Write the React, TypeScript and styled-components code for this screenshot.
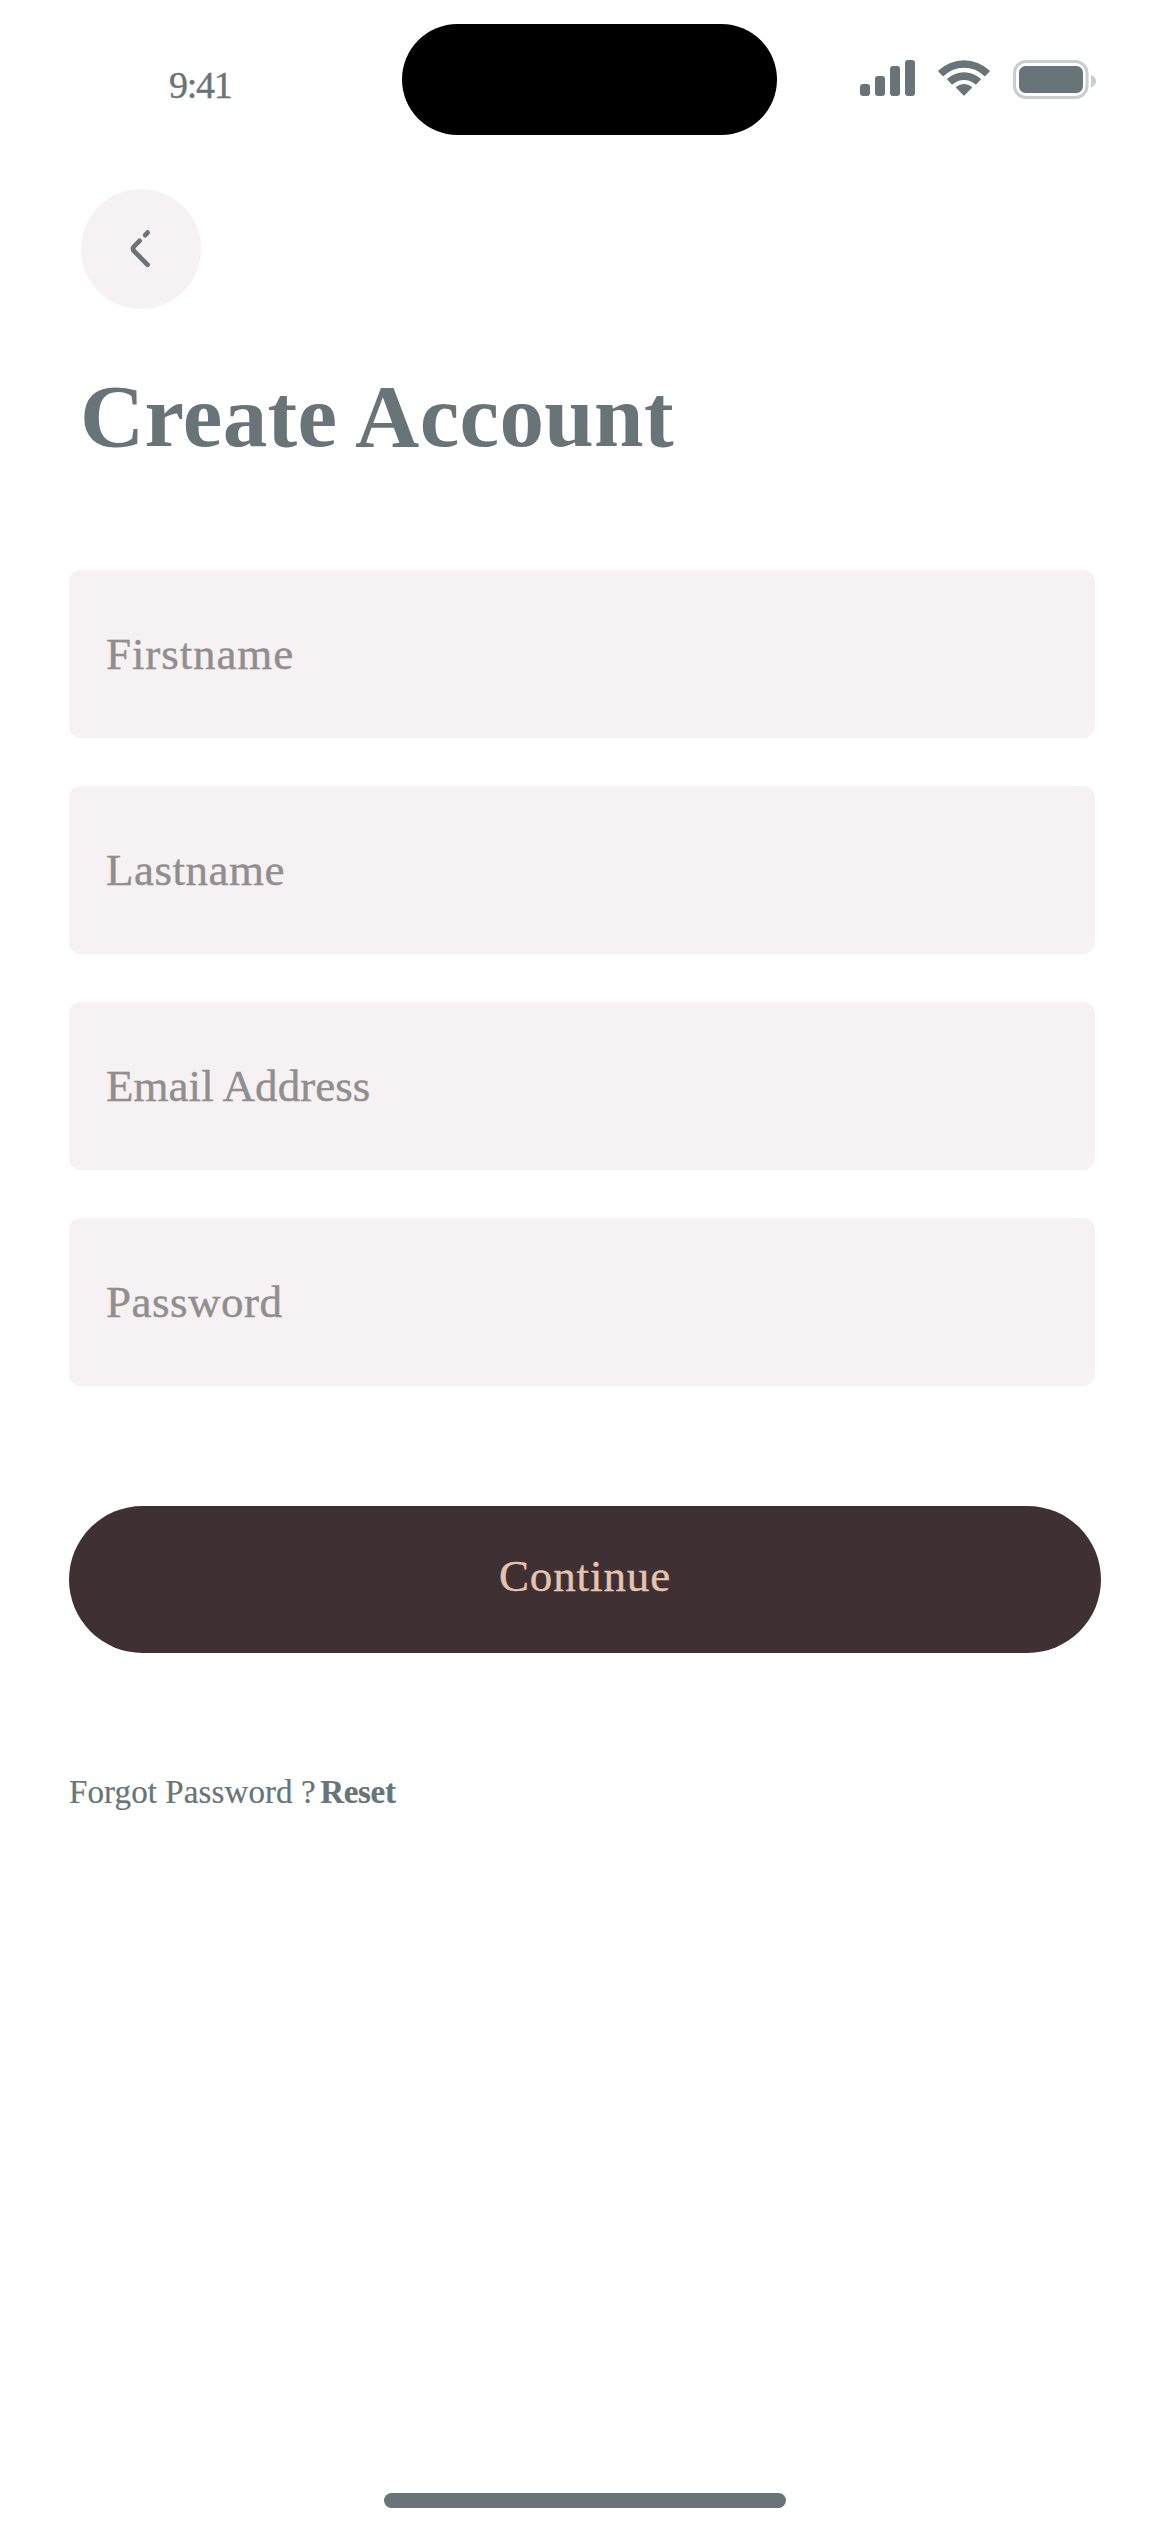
import React from "react";
import styled, { createGlobalStyle } from "styled-components";

const slate = "#687477";
const blush = "#f6f2f4";

const GlobalStyle = createGlobalStyle`
  * { box-sizing: border-box; }
  body { margin: 0; background: #fff; }
`;

const Screen = styled.div`
  width: 1170px;
  height: 2532px;
  display: flex;
  flex-direction: column;
  background: #fff;
  color: ${slate};
  font-family: "Liberation Serif", "Times New Roman", serif;
`;

const StatusBar = styled.header`
  height: 189px;
  padding: 24px 73px 0 169px;
  display: grid;
  grid-template-columns: 233px 375px 1fr;
  align-items: start;
`;

const Clock = styled.time`
  margin-top: 39px;
  font-size: 38px;
  line-height: 44px;
  letter-spacing: -1.3px;
  -webkit-text-stroke: 0.4px currentColor;
`;

const Island = styled.div`
  height: 111px;
  border-radius: 56px;
  background: #000;
`;

const Indicators = styled.div`
  margin-top: 36px;
  display: flex;
  justify-content: flex-end;
  align-items: flex-start;
`;

const SignalIcon = styled.svg`
  margin-right: 23px;
`;

const WifiIcon = styled.svg`
  margin-right: 23px;
`;

const Main = styled.main`
  flex: 1;
  padding: 0 69px;
  display: flex;
  flex-direction: column;
  align-items: flex-start;
`;

const BackButton = styled.button`
  width: 120px;
  height: 120px;
  margin: 0 0 0 12px;
  padding: 0;
  border: 0;
  border-radius: 50%;
  background: ${blush};
  color: ${slate};
  display: flex;
`;

const Title = styled.h1`
  margin: 59px 0 106px 11px;
  font-size: 89px;
  line-height: 96px;
  font-weight: 700;
  letter-spacing: 0.35px;
`;

const Fields = styled.div`
  width: 1026px;
  display: flex;
  flex-direction: column;
  gap: 48px;
`;

const Field = styled.label<{ $tracking: number }>`
  height: 168px;
  padding-left: 37px;
  border-radius: 12px;
  background: ${blush};
  color: #908e8f;
  font-size: 45px;
  line-height: 169px;
  letter-spacing: ${(p) => p.$tracking}px;
  -webkit-text-stroke: 0.4px currentColor;
`;

const ContinueButton = styled.button`
  width: 1032px;
  height: 147px;
  margin: 120px 0 119px;
  padding: 0 0 8px;
  border: 0;
  border-radius: 74px;
  background: #3f3033;
  color: #e5c3b1;
  font-family: inherit;
  font-size: 45px;
  letter-spacing: 0.9px;
  -webkit-text-stroke: 0.4px currentColor;
`;

const Hint = styled.p`
  margin: 0;
  font-size: 33px;
  line-height: 41px;
  letter-spacing: 0.1px;
  white-space: nowrap;
  -webkit-text-stroke: 0.2px currentColor;
`;

const ResetLink = styled.b`
  margin-left: -4px;
  letter-spacing: -0.3px;
`;

const HomeIndicator = styled.div`
  width: 402px;
  height: 15px;
  margin: 0 auto 24px;
  border-radius: 8px;
  background: ${slate};
`;

const fields = [
  { label: "Firstname", tracking: 0.9 },
  { label: "Lastname", tracking: 0.5 },
  { label: "Email Address", tracking: 0.05 },
  { label: "Password", tracking: 0.5 },
];

export default function App() {
  return (
    <>
      <GlobalStyle />
      <Screen>
        <StatusBar>
          <Clock>9:41</Clock>
          <Island />
          <Indicators>
            <SignalIcon width="55" height="36" viewBox="0 0 55 36" fill={slate}>
              <rect x="0" y="24" width="10" height="12" rx="3" />
              <rect x="15" y="16" width="10" height="20" rx="3" />
              <rect x="30" y="6" width="10" height="30" rx="3" />
              <rect x="45" y="0" width="10" height="36" rx="3" />
            </SignalIcon>
            <WifiIcon width="52" height="36" viewBox="0 0 52 36" fill={slate}>
              <path d="M.4 10.6Q0 11.1 .5 11.7L4.7 16Q5.2 16.4 5.7 16A29 29 0 0 1 46.3 16Q46.8 16.4 47.3 16L51.5 11.7Q52 11.1 51.6 10.6A37 37 0 0 0 .4 10.6Z" />
              <path d="M9.3 18.8Q8.9 19.3 9.4 19.8L13.6 24.2Q14.1 24.6 14.7 24.2A17 17 0 0 1 37.3 24.2Q37.9 24.6 38.4 24.2L42.6 19.8Q43.1 19.3 42.7 18.8A24.5 24.5 0 0 0 9.3 18.8Z" />
              <path d="M18.2 26.8Q17.7 27.4 18.3 28L25.3 35.2Q26 35.8 26.7 35.2L33.7 28Q34.3 27.4 33.8 26.8A12.5 12.5 0 0 0 18.2 26.8Z" />
            </WifiIcon>
            <svg width="84" height="39" viewBox="0 0 84 39">
              <rect x="1.5" y="1.5" width="72.5" height="36" rx="11.5" fill="none" stroke="#c9cecf" strokeWidth="3" />
              <rect x="6" y="6" width="64" height="27" rx="6.5" fill={slate} />
              <path d="M78 15V27.4C80.5 26.3 83 24.5 83 21.2S80.5 16 78 15Z" fill="#c9cecf" />
            </svg>
          </Indicators>
        </StatusBar>
        <Main>
          <BackButton aria-label="Back">
            <svg
              width="120"
              height="120"
              viewBox="0 0 120 120"
              fill="none"
              stroke="currentColor"
              strokeWidth="4.7"
              strokeLinecap="round"
              strokeLinejoin="round"
            >
              <path d="M66.6 43.6L64.2 46.2" />
              <path d="M58.6 51.8L53.3 57.1Q50.8 59.8 53.3 62.4L66.6 75.8" />
            </svg>
          </BackButton>
          <Title>Create Account</Title>
          <Fields>
            {fields.map((f) => (
              <Field key={f.label} $tracking={f.tracking}>
                {f.label}
              </Field>
            ))}
          </Fields>
          <ContinueButton>Continue</ContinueButton>
          <Hint>
            Forgot Password ? <ResetLink>Reset</ResetLink>
          </Hint>
        </Main>
        <HomeIndicator />
      </Screen>
    </>
  );
}
